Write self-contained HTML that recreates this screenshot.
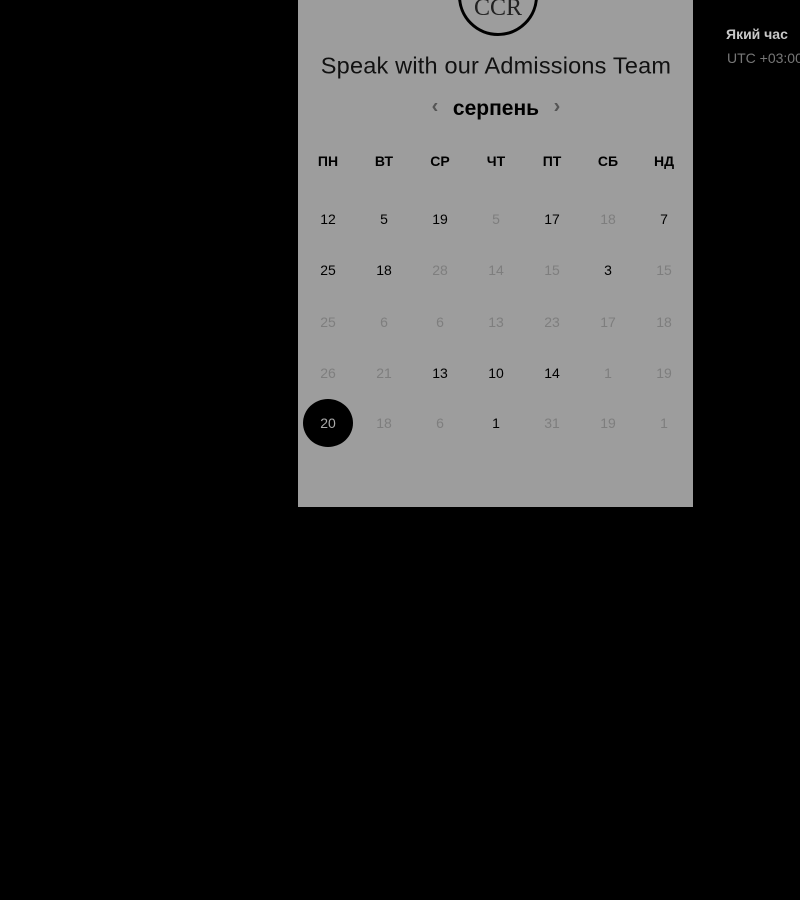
<!DOCTYPE html>
<html><head><meta charset="utf-8"><style>
body{margin:0;width:800px;height:900px;background:#000;position:relative;overflow:hidden;font-family:"Liberation Sans",sans-serif}
.panel{position:absolute;left:298px;top:0;width:395px;height:507px;background:#9d9d9d}
.logo{position:absolute;left:458px;top:-44px;width:74px;height:74px;border:3px solid #000;border-radius:50%}
.logo span{position:absolute;left:0;right:0;top:36px;text-align:center;font-family:"Liberation Serif",serif;font-size:24px;color:#222;line-height:26px}
.t{position:absolute;white-space:nowrap;transform:translate(-50%,-50%)}
.title{left:496px;top:66px;font-size:23.5px;color:#111;letter-spacing:0.2px}
.month{left:496px;top:109px;font-size:21px;color:#000;font-weight:bold}
.arr{font-size:20px;color:#555;top:107px;font-weight:bold}
.dow{font-size:14px;font-weight:bold;color:#000;top:161px}
.d{font-size:14px;color:#000}
.f{color:#7e7e7e}
.sel{position:absolute;left:303px;top:399px;width:50px;height:48px;border-radius:50%;background:#000}
.r{position:absolute;color:#c8c8c8;font-size:14px;font-weight:bold;left:726px;top:26px;white-space:nowrap}
.u{position:absolute;color:#777;font-size:14px;left:727px;top:50px;white-space:nowrap}
</style></head><body>
<div class="panel"></div>
<div class="logo"><span>CCR</span></div>
<div class="t title">Speak with our Admissions Team</div>
<div class="t arr" style="left:435px">‹</div>
<div class="t month">серпень</div>
<div class="t arr" style="left:557px">›</div>
<div class="t dow" style="left:328px">ПН</div>
<div class="t dow" style="left:384px">ВТ</div>
<div class="t dow" style="left:440px">СР</div>
<div class="t dow" style="left:496px">ЧТ</div>
<div class="t dow" style="left:552px">ПТ</div>
<div class="t dow" style="left:608px">СБ</div>
<div class="t dow" style="left:664px">НД</div>
<div class="sel"></div>
<div id="g"></div>
<div class="r">Який час</div>
<div class="u">UTC +03:00</div>
<script>
var rows=[
[["12",0],["5",0],["19",0],["5",1],["17",0],["18",1],["7",0]],
[["25",0],["18",0],["28",1],["14",1],["15",1],["3",0],["15",1]],
[["25",1],["6",1],["6",1],["13",1],["23",1],["17",1],["18",1]],
[["26",1],["21",1],["13",0],["10",0],["14",0],["1",1],["19",1]],
[["20",2],["18",1],["6",1],["1",0],["31",1],["19",1],["1",1]]];
var ys=[219,270,322,373,423],h="";
rows.forEach(function(r,i){r.forEach(function(c,j){
var st=c[1]==2?"color:#aaa":"";
h+='<div class="t d'+(c[1]==1?' f':'')+'" style="left:'+(328+56*j)+'px;top:'+ys[i]+'px;'+st+'">'+c[0]+'</div>';});});
document.getElementById("g").innerHTML=h;
</script>
</body></html>
